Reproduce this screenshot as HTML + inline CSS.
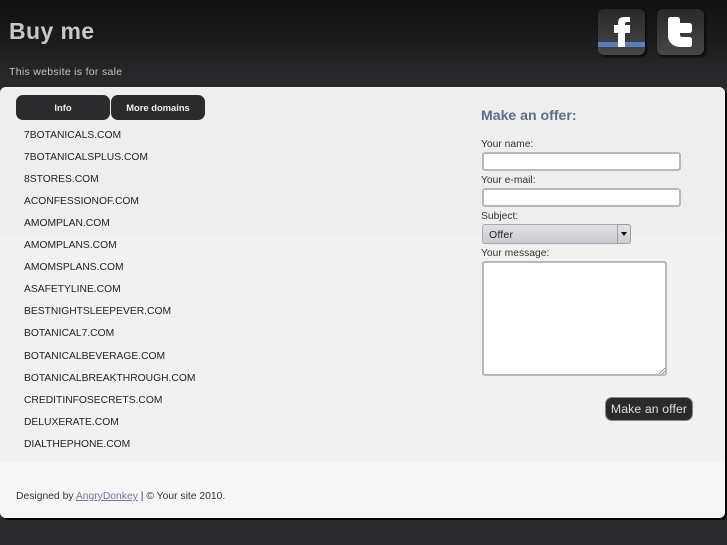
<!DOCTYPE html>
<html>
<head>
<meta charset="utf-8">
<style>
html,body{margin:0;padding:0}
body{width:727px;height:545px;position:relative;overflow:hidden;background:#2a2a2c;font-family:"Liberation Sans",sans-serif;color:#222}
.a{position:absolute;white-space:nowrap}
#hdr{left:0;top:0;width:727px;height:90px;background:linear-gradient(#111 0,#141414 14px,#1b1b1c 40px,#252527 65px,#2a2a2c 90px)}
#panel{left:0;top:87px;width:725px;height:431px;border-radius:6px;overflow:hidden;background:#f1f1f1;box-shadow:2px 2px 0 #050505}
#p1{left:0;top:0;width:725px;height:147px;background:#eee}
#p3{left:0;top:375px;width:725px;height:56px;background:#f6f6f6}
.btn{top:95px;height:25px;line-height:26px;background:#2b2b2d;color:#eee;font-size:9.4px;font-weight:bold;text-align:center;border-radius:7px}
.d{left:24px;font-size:10.3px;line-height:14px;color:#222}
.l{left:481px;font-size:10.3px;line-height:13px;color:#333}
.in{box-sizing:border-box;background:#fff;border:2px solid #b8b8b8;border-radius:3px}
.ic{width:47px;height:46px;border-radius:6px;background:linear-gradient(#29292b,#47474a);box-shadow:2px 2px 2px #0c0c0c;overflow:hidden}
</style>
</head>
<body>
<div class="a" id="hdr"></div>
<div class="a" style="left:9px;top:16px;font-size:23px;line-height:30px;font-weight:bold;color:#c8c8c8;letter-spacing:.4px">Buy me</div>
<div class="a" style="left:9px;top:65px;font-size:10.5px;line-height:14px;color:#c4c4c4;letter-spacing:.3px">This website is for sale</div>

<div class="a ic" style="left:598px;top:9px">
  <svg width="47" height="46" style="position:absolute;left:0;top:0">
    <rect x="0" y="33" width="47" height="5" fill="#5a7fc0"/>
    <path d="M20 38V24h-4v-8h4v-2c0-4 2-6 6-6h6v5h-3c-1.500 0-2 1-2 3h5v8h-5v14z" fill="#fff"/>
  </svg>
</div>
<div class="a ic" style="left:657px;top:9px">
  <svg width="47" height="46" style="position:absolute;left:0;top:0">
    <path d="M11 11c0-2 1-3 3-3h6c2 0 3 1 3 3v3h9c2 0 3 1 3 3v4c0 2-1 3-3 3H23v2c0 1 1 2 2 2h7c2 0 3 1 3 3v4c0 2-1 3-3 3H24C16 38 11 33 11 27z" fill="#fff"/>
  </svg>
</div>

<div class="a" id="panel">
  <div class="a" id="p1"></div>
  <div class="a" id="p3"></div>
</div>

<div class="a btn" style="left:16px;width:94px">Info</div>
<div class="a btn" style="left:111px;width:94px">More domains</div>

<div class="a d" style="top:129px">7BOTANICALS.COM</div>
<div class="a d" style="top:151px">7BOTANICALSPLUS.COM</div>
<div class="a d" style="top:173px">8STORES.COM</div>
<div class="a d" style="top:195px">ACONFESSIONOF.COM</div>
<div class="a d" style="top:217px">AMOMPLAN.COM</div>
<div class="a d" style="top:239px">AMOMPLANS.COM</div>
<div class="a d" style="top:261px">AMOMSPLANS.COM</div>
<div class="a d" style="top:283px">ASAFETYLINE.COM</div>
<div class="a d" style="top:305px">BESTNIGHTSLEEPEVER.COM</div>
<div class="a d" style="top:327px">BOTANICAL7.COM</div>
<div class="a d" style="top:350px">BOTANICALBEVERAGE.COM</div>
<div class="a d" style="top:372px">BOTANICALBREAKTHROUGH.COM</div>
<div class="a d" style="top:394px">CREDITINFOSECRETS.COM</div>
<div class="a d" style="top:416px">DELUXERATE.COM</div>
<div class="a d" style="top:438px">DIALTHEPHONE.COM</div>

<div class="a" style="left:481px;top:106px;font-size:14.1px;line-height:18px;font-weight:bold;color:#5f6b8e">Make an offer:</div>

<div class="a l" style="top:138px">Your name:</div>
<div class="a in" style="left:482px;top:152px;width:199px;height:19px"></div>
<div class="a l" style="top:174px">Your e-mail:</div>
<div class="a in" style="left:482px;top:188px;width:199px;height:19px"></div>
<div class="a l" style="top:210px">Subject:</div>
<div class="a" style="box-sizing:border-box;left:482px;top:224px;width:149px;height:20px;border:1px solid #a8a8a8;border-radius:3px;background:linear-gradient(#e0e0e4,#cacad0);font-size:10.5px;line-height:20px;color:#222;padding-left:6px;letter-spacing:.2px">Offer</div>
<div class="a" style="box-sizing:border-box;left:617px;top:224px;width:14px;height:20px;border:1px solid #a0a0a0;border-radius:0 3px 3px 0;background:linear-gradient(#e2e2e4,#d0d0d3)"></div>
<svg class="a" style="left:621px;top:232px" width="7" height="5"><path d="M0 0h6L3 4z" fill="#111"/></svg>
<div class="a l" style="top:247px">Your message:</div>
<div class="a in" style="left:482px;top:261px;width:185px;height:115px"></div>
<svg class="a" style="left:659px;top:368px" width="7" height="7"><path d="M0 6L6 0M3 6L6 3" stroke="#999" stroke-width="1" fill="none"/></svg>

<div class="a" style="box-sizing:border-box;left:605px;top:397px;width:88px;height:24px;background:#2b2b2d;border:1px solid #8a8a8a;border-radius:7px;color:#ddd;font-size:12.3px;line-height:22px;text-align:center;letter-spacing:.1px">Make an offer</div>

<div class="a" style="left:16px;top:490px;font-size:10.35px;line-height:14px;color:#333">Designed by <span style="color:#6d78a0;text-decoration:underline">AngryDonkey</span> | © Your site 2010.</div>
</body>
</html>
